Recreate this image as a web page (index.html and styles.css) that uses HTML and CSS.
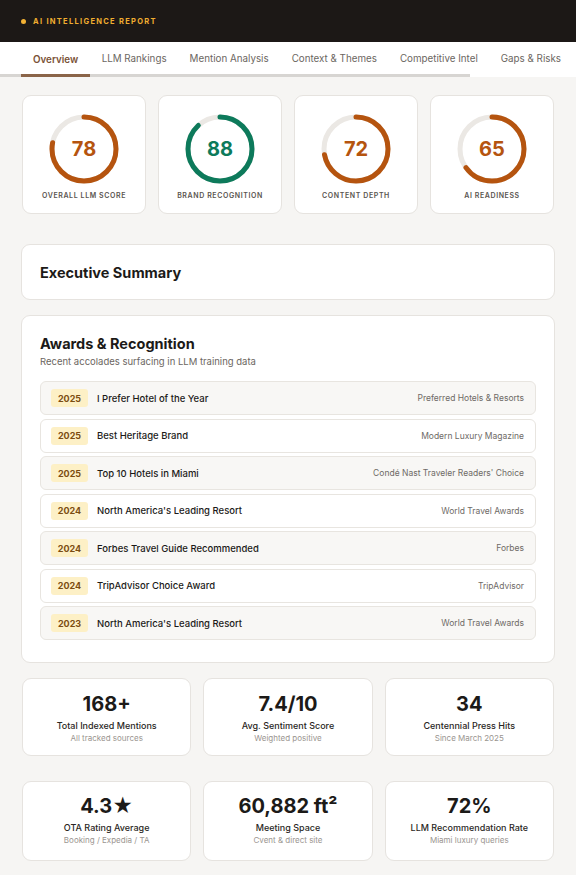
FILE: index.html
```html
<!DOCTYPE html>
<html>
<head>
<meta charset="utf-8">
<link rel="stylesheet" href="styles.css">
</head>
<body>
<header class="topbar">
  <span class="dot"></span>
  <span class="brand">AI Intelligence Report</span>
</header>
<nav class="tabs">
  <div class="tab-list">
    <a class="tab active">Overview</a>
    <a class="tab">LLM Rankings</a>
    <a class="tab">Mention Analysis</a>
    <a class="tab">Context &amp; Themes</a>
    <a class="tab">Competitive Intel</a>
    <a class="tab">Gaps &amp; Risks</a>
  </div>
  <div class="scroll-thumb"></div>
</nav>
<main class="page">
  <section class="scores">
    <div class="card score">
      <div class="ring">
        <svg viewBox="0 0 70 70" width="70" height="70"><circle class="track" cx="35" cy="35" r="32"/><circle class="arc orange" cx="35" cy="35" r="32" style="stroke-dasharray:156.8 201.1"/></svg>
        <span class="ring-num orange-t">78</span>
      </div>
      <div class="score-label">Overall LLM Score</div>
    </div>
    <div class="card score">
      <div class="ring">
        <svg viewBox="0 0 70 70" width="70" height="70"><circle class="track" cx="35" cy="35" r="32"/><circle class="arc green" cx="35" cy="35" r="32" style="stroke-dasharray:176.9 201.1"/></svg>
        <span class="ring-num green-t">88</span>
      </div>
      <div class="score-label">Brand Recognition</div>
    </div>
    <div class="card score">
      <div class="ring">
        <svg viewBox="0 0 70 70" width="70" height="70"><circle class="track" cx="35" cy="35" r="32"/><circle class="arc orange" cx="35" cy="35" r="32" style="stroke-dasharray:144.8 201.1"/></svg>
        <span class="ring-num orange-t">72</span>
      </div>
      <div class="score-label">Content Depth</div>
    </div>
    <div class="card score">
      <div class="ring">
        <svg viewBox="0 0 70 70" width="70" height="70"><circle class="track" cx="35" cy="35" r="32"/><circle class="arc orange" cx="35" cy="35" r="32" style="stroke-dasharray:130.7 201.1"/></svg>
        <span class="ring-num orange-t">65</span>
      </div>
      <div class="score-label">AI Readiness</div>
    </div>
  </section>

  <section class="card summary">
    <h2>Executive Summary</h2>
  </section>

  <section class="card awards">
    <h2>Awards &amp; Recognition</h2>
    <p class="sub">Recent accolades surfacing in LLM training data</p>
    <div class="award-list">
      <div class="award alt"><span class="year">2025</span><span class="name">I Prefer Hotel of the Year</span><span class="src">Preferred Hotels &amp; Resorts</span></div>
      <div class="award"><span class="year">2025</span><span class="name">Best Heritage Brand</span><span class="src">Modern Luxury Magazine</span></div>
      <div class="award alt"><span class="year">2025</span><span class="name">Top 10 Hotels in Miami</span><span class="src">Condé Nast Traveler Readers' Choice</span></div>
      <div class="award"><span class="year">2024</span><span class="name">North America's Leading Resort</span><span class="src">World Travel Awards</span></div>
      <div class="award alt"><span class="year">2024</span><span class="name">Forbes Travel Guide Recommended</span><span class="src">Forbes</span></div>
      <div class="award"><span class="year">2024</span><span class="name">TripAdvisor Choice Award</span><span class="src">TripAdvisor</span></div>
      <div class="award alt"><span class="year">2023</span><span class="name">North America's Leading Resort</span><span class="src">World Travel Awards</span></div>
    </div>
  </section>

  <section class="stats first">
    <div class="card stat"><div class="big">168+</div><div class="lbl">Total Indexed Mentions</div><div class="note">All tracked sources</div></div>
    <div class="card stat"><div class="big">7.4/10</div><div class="lbl">Avg. Sentiment Score</div><div class="note">Weighted positive</div></div>
    <div class="card stat"><div class="big">34</div><div class="lbl">Centennial Press Hits</div><div class="note">Since March 2025</div></div>
  </section>

  <section class="stats second">
    <div class="card stat"><div class="big">4.3★</div><div class="lbl">OTA Rating Average</div><div class="note">Booking / Expedia / TA</div></div>
    <div class="card stat"><div class="big">60,882 ft²</div><div class="lbl">Meeting Space</div><div class="note">Cvent &amp; direct site</div></div>
    <div class="card stat"><div class="big">72%</div><div class="lbl">LLM Recommendation Rate</div><div class="note">Miami luxury queries</div></div>
  </section>
</main>
</body>
</html>
```

FILE: styles.css
```css
* { box-sizing: border-box; }
html, body { margin: 0; padding: 0; }
body {
  background: #f6f5f3;
  font-family: "Inter", "Noto Sans", "Liberation Sans", sans-serif;
  color: #1c1a18;
  width: 576px;
  overflow: hidden;
}
.topbar {
  height: 42px;
  background: #1c1816;
  display: flex;
  align-items: center;
  padding-left: 21px;
  gap: 7px;
}
.dot {
  width: 5px; height: 5px; border-radius: 50%;
  background: #f2b134;
}
.brand {
  color: #f0ad30;
  font-size: 7.5px;
  font-weight: 700;
  letter-spacing: 1.3px;
  text-transform: uppercase;
}
.tabs {
  position: relative;
  background: #fff;
  height: 35px;
  overflow: hidden;
}
.tab-list {
  display: flex;
  height: 35px;
  padding-left: 21px;
  white-space: nowrap;
}
.tab {
  display: flex;
  align-items: center;
  padding: 0 11.5px 2px;
  font-size: 9.8px;
  color: #6b6661;
  position: relative;
  z-index: 2;
}
.tab.active {
  color: #7a5236;
  font-weight: 600;
  border-bottom: 3px solid #8a6448;
  padding: 3px 12px 0;
}
.scroll-thumb {
  position: absolute;
  left: 0; bottom: 0;
  width: 470px; height: 3px;
  background: #d7d5d2;
  z-index: 1;
}
.page {
  padding: 18px 22px 20px;
}
.card {
  background: #fff;
  border: 1px solid #e6e3df;
  border-radius: 9px;
}
.scores {
  display: grid;
  grid-template-columns: repeat(4, 1fr);
  gap: 12px;
  margin-bottom: 30px;
}
.score {
  height: 119px;
  display: flex;
  flex-direction: column;
  align-items: center;
  padding-top: 18px;
}
.ring {
  position: relative;
  width: 70px; height: 70px;
}
.ring svg { display: block; transform: rotate(-90deg); }
.track { fill: none; stroke: #ebe8e4; stroke-width: 5; }
.arc { fill: none; stroke-width: 5; stroke-linecap: round; }
.arc.orange { stroke: #b5540f; }
.arc.green { stroke: #0d7a5b; }
.ring-num {
  position: absolute;
  inset: 0;
  display: flex;
  align-items: center;
  justify-content: center;
  font-size: 20px;
  font-weight: 700;
}
.orange-t { color: #b5540f; }
.green-t { color: #0d7a5b; }
.score-label {
  margin-top: 7px;
  font-size: 7px;
  font-weight: 600;
  letter-spacing: 0.6px;
  text-transform: uppercase;
  color: #5a5550;
}
h2 {
  margin: 0;
  font-size: 14.5px;
  font-weight: 700;
  color: #1c1a18;
}
.summary {
  height: 56px;
  display: flex;
  align-items: center;
  padding: 0 18px;
  margin: 0 -1px 15px;
}
.awards {
  padding: 19px 18px 22px;
  margin: 0 -1px 15px;
}
.sub {
  margin: 4px 0 14px;
  font-size: 9.5px;
  color: #6b6661;
}
.award-list {
  display: flex;
  flex-direction: column;
  gap: 3.5px;
}
.award {
  display: flex;
  align-items: center;
  height: 34px;
  border: 1px solid #e8e5e0;
  border-radius: 6px;
  padding: 0 11px 0 10px;
  background: #fff;
}
.award.alt { background: #f8f7f5; }
.year {
  width: 37px;
  height: 18px;
  background: #fdf0c6;
  border-radius: 3px;
  color: #7c4d12;
  font-size: 9px;
  font-weight: 700;
  display: flex;
  align-items: center;
  justify-content: center;
  margin-right: 9px;
}
.name {
  flex: 1;
  font-size: 9.5px;
  font-weight: 500;
  color: #1c1a18;
}
.src {
  font-size: 8.5px;
  color: #6e6a66;
}
.stats {
  display: grid;
  grid-template-columns: repeat(3, 1fr);
  gap: 12px;
}
.stats.first { margin-bottom: 25px; }
.stat {
  height: 78px;
  display: flex;
  flex-direction: column;
  align-items: center;
  padding-top: 13px;
}
.stats.second .stat { height: 80px; padding-top: 12px; }
.big {
  font-size: 20px;
  font-weight: 700;
  color: #1c1a18;
  line-height: 24px;
}
.lbl {
  margin-top: 4px;
  font-size: 9px;
  font-weight: 500;
  color: #2a2724;
}
.note {
  margin-top: 2px;
  font-size: 8px;
  color: #9a9590;
}
```
